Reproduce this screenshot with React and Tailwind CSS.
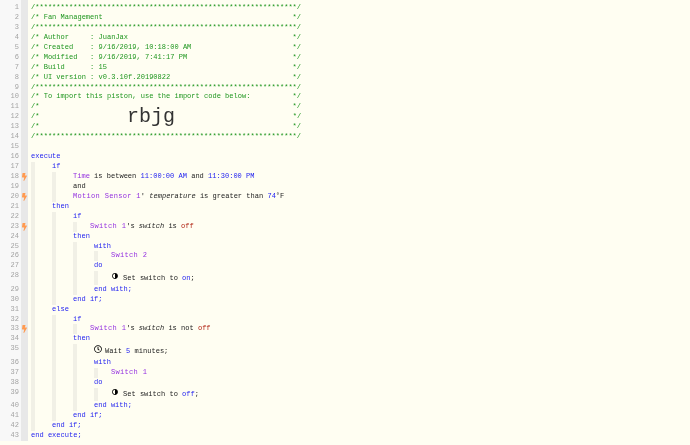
import React from 'react';
import { FaBolt, FaRegClock, FaAdjust } from 'react-icons/fa';

// indent helpers: g = guide bar + gap, b = blank column
const K = ({ children }) => <span className="text-[#1c1cf0]">{children}</span>;
const D = ({ children }) => <span className="text-[#9430e0]">{children}</span>;
const Dev = ({ children }) => <span className="text-[#9430e0] tracking-[0.3px]">{children}</span>;
const V = ({ children }) => <span className="text-[#1c1cf0]">{children}</span>;
const R = ({ children }) => <span className="text-[#b02010]">{children}</span>;
const I = ({ children }) => <span className="italic">{children}</span>;

const Guide = ({ on, w }) => (
    <div className={`h-full shrink-0 ${w === 17 ? 'w-[17px]' : 'w-[21px]'}`}>
        {on && <div className="h-full w-[4px] bg-[#f1f0e6]"></div>}
    </div>
);

const Comment = ({ children }) => <span className="text-[#1f961f]">{children}</span>;

const Action = ({ icon, wide, children }) => (
    <div className="flex h-full">
        <span className={wide ? 'w-[12px] pt-[1.5px]' : 'w-[11px] pt-[0.5px]'}>{icon}</span>
        <span className="pt-[2.5px]">{children}</span>
    </div>
);

const stars = '/' + '*'.repeat(62) + '/';
const line = (s) => s.padEnd(62, ' ') + '*/';

const rows = [
    { c: <Comment>{stars}</Comment> },
    { c: <Comment>{line('/* Fan Management')}</Comment> },
    { c: <Comment>{stars}</Comment> },
    { c: <Comment>{line('/* Author     : JuanJax')}</Comment> },
    { c: <Comment>{line('/* Created    : 9/16/2019, 10:18:00 AM')}</Comment> },
    { c: <Comment>{line('/* Modified   : 9/16/2019, 7:41:17 PM')}</Comment> },
    { c: <Comment>{line('/* Build      : 15')}</Comment> },
    { c: <Comment>{line('/* UI version : v0.3.10f.20190822')}</Comment> },
    { c: <Comment>{stars}</Comment> },
    { c: <Comment>{line('/* To import this piston, use the import code below:')}</Comment> },
    { c: <Comment>{line('/*')}</Comment> },
    {
        c: (
            <div className="flex items-center h-full">
                <Comment>/*</Comment>
                <span className="ml-[87.5px] w-[165.9px] text-[20px] leading-[10px] text-[#333333]">rbjg</span>
                <Comment>*/</Comment>
            </div>
        ),
    },
    { c: <Comment>{line('/*')}</Comment> },
    { c: <Comment>{stars}</Comment> },
    { c: '' },
    { c: <K>execute</K> },
    { g: [1], c: <K>if</K> },
    { g: [1, 1], bolt: true, c: <><D>Time</D> is between <V>11:00:00 AM</V> and <V>11:30:00 PM</V></> },
    { g: [1, 1], c: 'and' },
    { g: [1, 1], bolt: true, c: <><Dev>Motion Sensor 1</Dev>' <I>temperature</I> is greater than <V>74</V>°F</> },
    { g: [1], c: <K>then</K> },
    { g: [1, 1], c: <K>if</K> },
    { g: [1, 1, 2], bolt: true, c: <><Dev>Switch 1</Dev>'s <I>switch</I> is <R>off</R></> },
    { g: [1, 1], c: <K>then</K> },
    { g: [1, 1, 1], c: <K>with</K> },
    { g: [1, 1, 1, 2], c: <Dev>Switch 2</Dev> },
    { g: [1, 1, 1], c: <K>do</K> },
    {
        g: [1, 1, 1, 2],
        tall: true,
        c: <Action wide icon={<FaAdjust className="ml-[1px] size-[6px] -scale-x-100 text-black" />}>Set switch to <V>on</V>;</Action>,
    },
    { g: [1, 1, 1], c: <K>end with;</K> },
    { g: [1, 1], c: <K>end if;</K> },
    { g: [1], c: <K>else</K> },
    { g: [1, 1], c: <K>if</K> },
    { g: [1, 1, 2], bolt: true, c: <><Dev>Switch 1</Dev>'s <I>switch</I> is not <R>off</R></> },
    { g: [1, 1], c: <K>then</K> },
    {
        g: [1, 1, 1],
        tall: true,
        c: <Action icon={<FaRegClock className="size-[8px] text-black" />}>Wait <V>5</V> minutes;</Action>,
    },
    { g: [1, 1, 1], c: <K>with</K> },
    { g: [1, 1, 1, 2], c: <Dev>Switch 1</Dev> },
    { g: [1, 1, 1], c: <K>do</K> },
    {
        g: [1, 1, 1, 2],
        tall: true,
        c: <Action wide icon={<FaAdjust className="ml-[1px] size-[6px] -scale-x-100 text-black" />}>Set switch to <V>off</V>;</Action>,
    },
    { g: [1, 1, 1], c: <K>end with;</K> },
    { g: [1, 1], c: <K>end if;</K> },
    { g: [1], c: <K>end if;</K> },
    { c: <K>end execute;</K> },
];

const App = () => {
    return (
        <div className="w-[690px] h-[445px] overflow-hidden bg-[#fffef2] font-['Liberation_Mono',monospace] text-[7.04px] text-[#222222] blur-[0.45px]">
            <div className="flex flex-col">
                <div className="flex h-[3px]">
                    <div className="w-[21px] bg-[#f8f8f8]"></div>
                    <div className="w-[7px] bg-[#e8e8e8]"></div>
                </div>
                {rows.map((r, i) => (
                    <div key={i} className={`flex ${r.tall ? 'h-[13.4px]' : 'h-[9.95px]'}`}>
                        <div className="w-[21px] shrink-0 bg-[#f8f8f8] text-[#a4a4a4] text-right pr-[2px] leading-[9.95px]">{i + 1}</div>
                        <div className="w-[7px] shrink-0 bg-[#e8e8e8] flex items-start justify-center pt-[1px]">
                            {r.bolt && <FaBolt className="size-[8px] text-[#ff9a50]" />}
                        </div>
                        <div className="w-[3px] shrink-0"></div>
                        {(r.g || []).map((g, j) => <Guide key={j} on={true} w={g === 2 ? 17 : 21} />)}
                        <div className="whitespace-pre leading-[9.95px]">{r.c}</div>
                    </div>
                ))}
            </div>
        </div>
    );
};

export default App;
